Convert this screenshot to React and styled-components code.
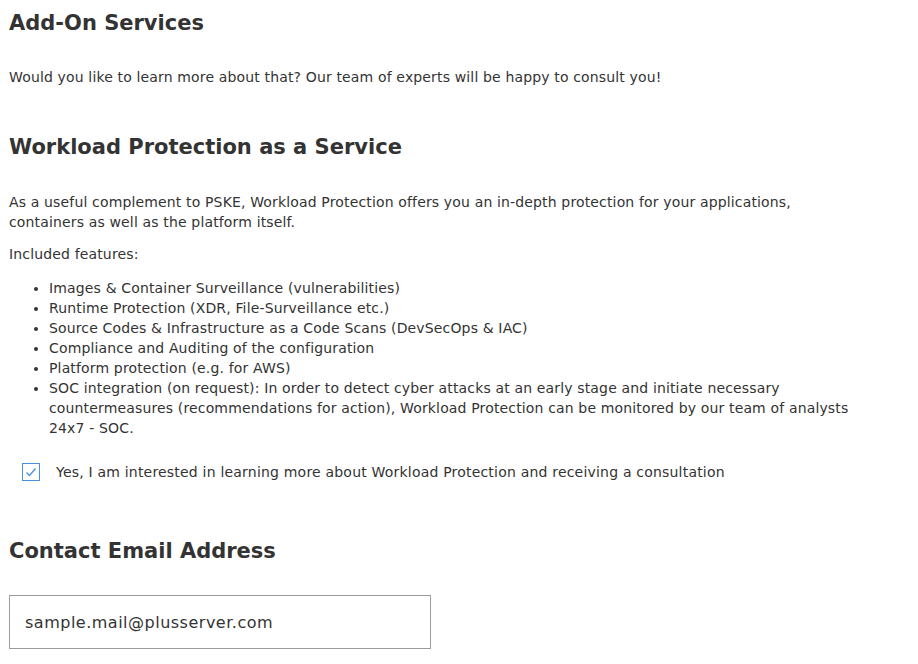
import React, { useState } from "react";
import styled, { createGlobalStyle } from "styled-components";

const GlobalStyle = createGlobalStyle`
  body {
    margin: 0;
    background: #ffffff;
    font-family: "DejaVu Sans", "Liberation Sans", sans-serif;
    color: #333333;
  }
`;

const Page = styled.div`
  width: 850px;
  padding: 1px 9px 0;
`;

const Heading = styled.h2`
  margin: ${props => props.top || "0"} 0 0;
  font-size: 21px;
  line-height: 44px;
  font-weight: 700;
  color: #333333;
`;

const Text = styled.p`
  margin: ${props => props.top || "0"} 0 0;
  font-size: 14px;
  line-height: 20px;
  letter-spacing: 0.15px;
`;

const List = styled.ul`
  margin: 14px 0 0;
  padding-left: 40px;
  font-size: 14px;
  line-height: 20px;
  letter-spacing: 0.15px;
`;

const Item = styled.li`
  padding-left: 0;
`;

const CheckRow = styled.label`
  display: flex;
  align-items: center;
  gap: 16px;
  margin: 24px 0 0 13px;
  font-size: 14px;
  line-height: 20px;
  letter-spacing: 0.2px;
  cursor: pointer;
`;

const Box = styled.span`
  width: 18px;
  height: 18px;
  box-sizing: border-box;
  border: 1px solid #4a90e2;
  display: flex;
  align-items: center;
  justify-content: center;
  background: #ffffff;
`;

const Input = styled.input`
  display: block;
  margin-top: 22px;
  width: 422px;
  height: 54px;
  box-sizing: border-box;
  border: 1px solid #9b9b9b;
  padding: 0 15px;
  font-family: inherit;
  font-size: 16px;
  letter-spacing: 0.5px;
  color: #333333;
  outline: none;
`;

const features = [
  "Images & Container Surveillance (vulnerabilities)",
  "Runtime Protection (XDR, File-Surveillance etc.)",
  "Source Codes & Infrastructure as a Code Scans (DevSecOps & IAC)",
  "Compliance and Auditing of the configuration",
  "Platform protection (e.g. for AWS)",
  "SOC integration (on request): In order to detect cyber attacks at an early stage and initiate necessary countermeasures (recommendations for action), Workload Protection can be monitored by our team of analysts 24x7 - SOC.",
];

const App = () => {
  const [checked, setChecked] = useState(true);
  const [email, setEmail] = useState("sample.mail@plusserver.com");

  return (
    <Page>
      <GlobalStyle />
      <Heading>Add-On Services</Heading>
      <Text top="22px">
        Would you like to learn more about that? Our team of experts will be happy to consult you!
      </Text>
      <Heading top="38px">Workload Protection as a Service</Heading>
      <Text top="23px">
        As a useful complement to PSKE, Workload Protection offers you an in-depth protection for your applications,
        containers as well as the platform itself.
      </Text>
      <Text top="12px">Included features:</Text>
      <List>
        {features.map((f, i) => (
          <Item key={i}>{f}</Item>
        ))}
      </List>
      <CheckRow onClick={() => setChecked(!checked)}>
        <Box>
          {checked && (
            <svg width="12" height="10" viewBox="0 0 12 10">
              <path d="M1.5 5.5 L4.5 8.5 L10.5 1.5" fill="none" stroke="#4a90e2" strokeWidth="1.3" />
            </svg>
          )}
        </Box>
        Yes, I am interested in learning more about Workload Protection and receiving a consultation
      </CheckRow>
      <Heading top="47px">Contact Email Address</Heading>
      <Input value={email} onChange={e => setEmail(e.target.value)} />
    </Page>
  );
};

export default App;
